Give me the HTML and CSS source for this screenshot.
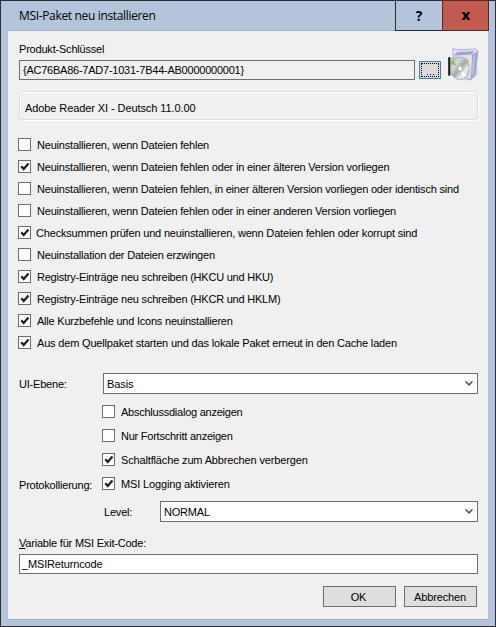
FILE: index.html
```html
<!DOCTYPE html>
<html lang="de">
<head>
<meta charset="utf-8">
<title>MSI-Paket neu installieren</title>
<link rel="stylesheet" href="styles.css">
</head>
<body>
<svg width="0" height="0" class="defs"><defs>
<path id="tick" d="M2.3 5.2 4.700 8 9.500 2.600" fill="none" stroke="#222" stroke-width="2.3"/>
<path id="chev" d="M.8 1v1.6L4 5.7l3.2-3.1V1L4 3.9z" fill="#505050" stroke="#505050" stroke-width=".5"/>
</defs></svg>
<div class="window">
  <header class="titlebar">
    <h1>MSI-Paket neu installieren</h1>
    <button class="caption help" aria-label="Hilfe"><span>?</span></button>
    <button class="caption close" aria-label="Schließen"><svg width="10" height="8" viewBox="0 0 10 8"><path d="M.5 0h3L5 2.2 6.500 0h3L6.700 4 9.500 8h-3L5 5.800 3.500 8h-3L3.300 4z" fill="#000"/></svg></button>
  </header>
  <main class="client">
    <div class="product">
      <div class="key">
        <label>Produkt-Schlüssel</label>
        <div class="keyrow"><div class="field readonly"><span class="guid">{AC76BA86-7AD7-1031-7B44-AB0000000001}</span></div><button class="browse"><span><i></i><i></i><i></i></span></button></div>
      </div>
      <svg class="package" width="34" height="36" viewBox="0 0 34 36">
        <defs>
          <linearGradient id="front" x2="1" y2="1"><stop stop-color="#c3c6e2"/><stop offset=".6" stop-color="#e6e7f4"/><stop offset="1" stop-color="#b6bada"/></linearGradient>
          <linearGradient id="disc" x2="1" y2="1"><stop stop-color="#b4b8b8"/><stop offset=".3" stop-color="#d4d8d4"/><stop offset=".5" stop-color="#a4a8a8"/><stop offset=".7" stop-color="#eceeee"/><stop offset="1" stop-color="#8e9699"/></linearGradient>
          <linearGradient id="shade"><stop stop-color="#888"/><stop offset="1" stop-color="#ddd" stop-opacity="0"/></linearGradient>
        </defs>
        <path d="M20 33.500 33.500 26.500 27 21z" fill="url(#shade)"/>
        <path d="M5 8V1.500l3 1.500L27.500 2 30 4l-2.500 23-4.500 6L7 30z" fill="url(#front)" stroke="#9a9dc4" stroke-width=".8"/>
        <path d="M5.500 2.500 9 3.500 27.500 2.500 25 6.500 9 8.500 5.500 9z" fill="#dfe1f4"/>
        <path d="m5.500 8.500 4-3.500 17-1-3 3.500z" fill="#a3a6cf"/>
        <path d="m24 7.500 5.500-3-2.200 22.500-4.300 5z" fill="#a0a4cf"/>
        <path d="M25.500 8 27 7l-1.500 20-1.500 2z" fill="#c6c9e6"/>
        <path d="M14 12.500c4-3 7.500 0 7 4s2 7-1 9z" fill="#e2bd80"/>
        <path d="M2 10.500 7 11v20l-5-3.500z" fill="#bbbcbb"/>
        <path d="M1.200 10.200v18.500" stroke="#181818" stroke-width="2"/>
        <ellipse cx="12" cy="21.500" rx="9.300" ry="11.300" fill="url(#disc)" stroke="#a4a8aa" stroke-width=".7"/>
        <path d="m8.500 18.500-5.500-1.500 2-3.500z" fill="#70d72f"/>
        <path d="m12.500 23 2.500 9 4-4z" fill="#fff" opacity=".7"/>
        <ellipse cx="12" cy="21.500" rx="2.500" ry="3" fill="#f3f4f5" stroke="#8b969c" stroke-width=".8"/>
      </svg>
    </div>
    <div class="group"><span class="pname">Adobe Reader XI - Deutsch 11.0.00</span></div>
    <div class="options">
      <div class="check"><b></b><span class="t1">Neuinstallieren, wenn Dateien fehlen</span></div>
      <div class="check"><b><svg viewBox="0 0 11 11"><use href="#tick"/></svg></b><span class="t2">Neuinstallieren, wenn Dateien fehlen oder in einer älteren Version vorliegen</span></div>
      <div class="check"><b></b><span class="t3">Neuinstallieren, wenn Dateien fehlen, in einer älteren Version vorliegen oder identisch sind</span></div>
      <div class="check"><b></b><span class="t4">Neuinstallieren, wenn Dateien fehlen oder in einer anderen Version vorliegen</span></div>
      <div class="check"><b><svg viewBox="0 0 11 11"><use href="#tick"/></svg></b><span class="t5">Checksummen prüfen und neuinstallieren, wenn Dateien fehlen oder korrupt sind</span></div>
      <div class="check"><b></b><span class="t6">Neuinstallation der Dateien erzwingen</span></div>
      <div class="check"><b><svg viewBox="0 0 11 11"><use href="#tick"/></svg></b><span class="t7">Registry-Einträge neu schreiben (HKCU und HKU)</span></div>
      <div class="check"><b><svg viewBox="0 0 11 11"><use href="#tick"/></svg></b><span class="t8">Registry-Einträge neu schreiben (HKCR und HKLM)</span></div>
      <div class="check"><b><svg viewBox="0 0 11 11"><use href="#tick"/></svg></b><span class="t9">Alle Kurzbefehle und Icons neuinstallieren</span></div>
      <div class="check"><b><svg viewBox="0 0 11 11"><use href="#tick"/></svg></b><span class="t10">Aus dem Quellpaket starten und das lokale Paket erneut in den Cache laden</span></div>
    </div>
    <div class="uirow"><label class="ui">UI-Ebene:</label><div class="combo"><span class="basis">Basis</span><svg width="8" height="7"><use href="#chev"/></svg></div></div>
    <div class="uiopts">
      <div class="check c2"><b></b><span class="t11">Abschlussdialog anzeigen</span></div>
      <div class="check c2"><b></b><span class="t12">Nur Fortschritt anzeigen</span></div>
      <div class="check c2"><b><svg viewBox="0 0 11 11"><use href="#tick"/></svg></b><span class="t13">Schaltfläche zum Abbrechen verbergen</span></div>
      <label class="log">Protokollierung:</label>
      <div class="check c2"><b><svg viewBox="0 0 11 11"><use href="#tick"/></svg></b><span class="t14">MSI Logging aktivieren</span></div>
    </div>
    <div class="levelrow"><label class="lev">Level:</label><div class="combo"><span class="normal">NORMAL</span><svg width="8" height="7"><use href="#chev"/></svg></div></div>
    <label class="exit"><u>V</u>ariable für MSI Exit-Code:</label>
    <div class="field"><span class="ret">_MSIReturncode</span></div>
    <footer class="buttons"><button><span class="ok">OK</span></button><button><span class="abb">Abbrechen</span></button></footer>
  </main>
</div>
</body>
</html>
```
FILE: styles.css
```css
* { box-sizing: border-box; }
body { margin: 0; background: #2c2c34; }
.defs { display: none; }
.window {
  width: 496px; height: 627px;
  border: 1px solid #2c2c34;
  background: #b4c4da;
  font: 11px/14px "Liberation Sans", Arial, sans-serif;
  letter-spacing: -.2px;
  color: #000;
}
.window span, label { white-space: nowrap; }
button { padding: 0; font: inherit; color: inherit; letter-spacing: inherit; }
.titlebar { display: flex; height: 29px; padding-right: 6px; }
h1 {
  flex: 1; margin: 0; padding: 5px 0 0 18px;
  font: 12px/20px "Open Sans", "Noto Sans", sans-serif;
  letter-spacing: -.34px;
}
.caption {
  display: flex; align-items: center; justify-content: center;
  width: 48px; height: 31px; margin-top: -1px;
  border: 1px solid #2c2c34; background: #b4c4da;
}
.help { font: bold 14px/16px "Open Sans", sans-serif; }
.close { width: 47px; margin-left: -1px; background: #c35a50; border-color: #542b2b; }
.client {
  width: 480px; height: 590px; margin-left: 7px;
  padding: 11px 10px 0 11px;
  border-top: 1px solid #9fb0c8; border-bottom: 1px solid #9fb0c8;
  background: #f0f0f0;
}
.product { display: flex; gap: 7px; height: 49px; }
.key { width: 422px; flex: none; }
.key label { display: block; height: 18px; }
.package { flex: none; margin-top: 5px; }
.keyrow { display: flex; gap: 4px; align-items: center; }
.field {
  display: flex; align-items: center; height: 20px; padding-left: 3px;
  border: 1px solid #6e6e6e; background: #fff;
}
.readonly { width: 396px; background: #f0f0f0; }
.browse { width: 22px; height: 18px; padding: 1px; border: 1px solid #3c7fb1; background: #dcdcdc; }
.browse > span {
  display: flex; justify-content: center; align-items: flex-end; gap: 2px;
  width: 100%; height: 100%; padding-bottom: 1px; border: 1px dotted #000;
}
.browse i { width: 1px; height: 1px; background: #202; }
.group {
  display: flex; align-items: center; height: 29px; padding: 4px 0 0 5px;
  border: 1px solid #d5dfe5; border-radius: 3px; box-shadow: inset 1px 1px #fff, 1px 1px #fff;
}
.group, .uirow, .levelrow, .client > .field { width: 459px; }
.options { margin: 14px 0 0 -1px; }
.check { display: flex; align-items: center; gap: 6px; height: 22px; }
.check b { flex: none; width: 13px; height: 13px; margin-bottom: 1px; border: 1px solid #6e6e6e; background: #fff; }
.check svg { display: block; width: 11px; height: 11px; }
.uirow { display: grid; grid-template-columns: 84px 1fr; align-items: center; margin-top: 19px; }
.combo {
  display: flex; align-items: center; justify-content: space-between;
  height: 21px; padding: 0 4px 0 3px;
  border: 1px solid #6e6e6e; background: #fff;
}
.uiopts { display: grid; grid-template-columns: 83px 1fr; grid-auto-rows: 24px; align-items: center; margin-top: 6px; }
.c2 { grid-column: 2; height: 24px; }
.log { grid-row: 4; padding-top: 2px; }
.levelrow { display: grid; grid-template-columns: 56px 1fr; align-items: center; width: 374px; margin: 5px 0 0 85px; }
.exit { display: block; margin: 14px 0 4px; }
.buttons { display: flex; gap: 8px; justify-content: flex-end; margin: 12px 1px 0 0; }
.buttons button { width: 73px; height: 21px; border: 1px solid #6e6e6e; background: #dedede; }

/* Per-string tracking */
.guid { letter-spacing: -.24px; }
.pname { letter-spacing: -.09px; }
.t5 { margin-left: -1px; letter-spacing: -.18px; }
.t7, .t8, .t9 { letter-spacing: -.22px; }
.t10 { letter-spacing: -.18px; }
.t11, .t12 { letter-spacing: -.24px; }
.t13, .t14 { letter-spacing: -.15px; }
.basis { letter-spacing: -.1px; }
.ret { letter-spacing: -.15px; margin-left: -1px; }
.ok { margin-right: 2px; letter-spacing: -.2px; }
.abb { margin-right: 1px; letter-spacing: -.15px; }
```
